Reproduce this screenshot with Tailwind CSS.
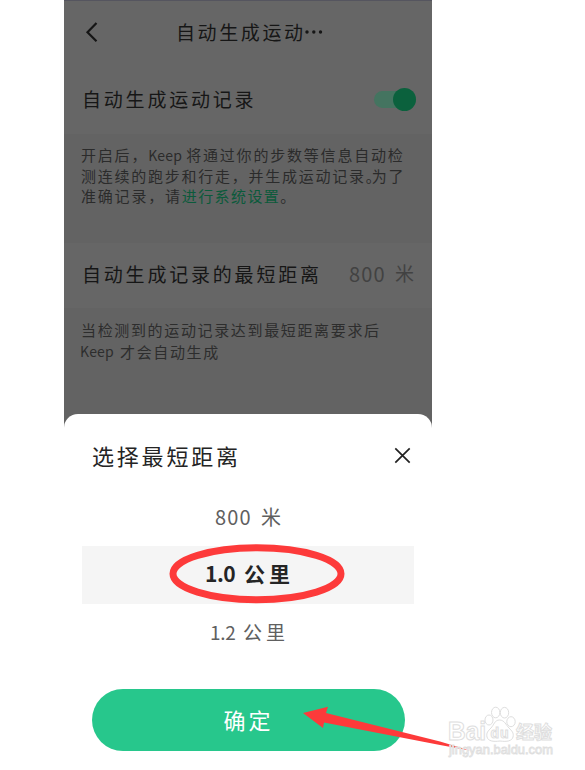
<!DOCTYPE html>
<html lang="zh-CN">
<head>
<meta charset="utf-8">
<title>自动生成运动记录</title>
<script src="https://cdn.jsdelivr.net/npm/@tailwindcss/browser@4"></script>
</head>
<body class="bg-white">
<div class="relative w-[585px] h-[770px] overflow-hidden font-['KaiTi','Noto_Sans_CJK_SC',sans-serif] whitespace-nowrap">
  <main class="ml-16 w-[368px] h-[770px] flex flex-col bg-[#636363] text-[#161616]">
    <section class="h-[134px] bg-[#666] border-t border-[#55555f]">
      <header class="h-[62px] flex items-center pl-[20px]">
        <svg class="w-[16px] h-[22px]" viewBox="0 0 16 22" fill="none" stroke="#151515" stroke-width="2.2"><path d="M12.5 2 3.500 11.200l9 9"/></svg>
        <h1 class="ml-[76px] text-[19px] tracking-[2.6px]">自动生成运动</h1>
        <svg class="w-[20px] h-[4px] -ml-[2px]" viewBox="0 0 20 4" fill="#161616"><circle cx="3" cy="2" r="1.700"/><circle cx="9.800" cy="2" r="1.700"/><circle cx="16.500" cy="2" r="1.700"/></svg>
      </header>
      <div class="h-[72px] flex justify-between items-center pl-[18px] pr-[16px]">
        <span class="text-[19px] tracking-[2.8px]">自动生成运动记录</span>
        <span class="flex items-center justify-end w-[42px] h-[17px] mt-px rounded-full bg-[#447460]"><i class="size-[23px] rounded-full bg-[#0b613d] shrink-0"></i></span>
      </div>
    </section>
    <section class="h-[109px] pt-[11px] pl-[17px] text-[15px] leading-[20.7px] tracking-[1.8px] text-[#2b2b2b]">
      <p class="flex"><span>开启后，</span><span class="w-[38px] text-[14px] tracking-[0.2px]">Keep</span><span>将通过你的步数等信息自动检</span></p>
      <p class="tracking-[1.75px]">测连续的跑步和行走，并生成运动记录<span class="tracking-[-9px]">。</span>为了</p>
      <p class="flex"><span>准确记录，请</span><span class="text-[#0b5a3b] tracking-[1.4px]">进行系统设置</span><span>。</span></p>
    </section>
    <section class="h-[65px] pb-[3px] bg-[#666] flex items-center justify-between pl-[18px] pr-[18px]">
      <span class="text-[19px] tracking-[2.8px]">自动生成记录的最短距离</span>
      <span class="flex text-[#424242] text-[20px]"><span class="w-[46px] tracking-[1.2px]">800</span><span class="text-[19px]">米</span></span>
    </section>
    <section class="h-[106px] pt-[11px] pl-[17px] text-[15px] leading-[21.500px] tracking-[1.65px] text-[#2d2d2d]">
      <p>当检测到的运动记录达到最短距离要求后</p>
      <p class="flex"><span class="w-[40px] text-[14px] tracking-[0.2px] -ml-px">Keep</span><span>才会自动生成</span></p>
    </section>
    <section class="h-[356px] shrink-0 bg-white rounded-t-[14px] flex flex-col">
      <header class="h-[82px] pl-[28px] pr-[21px] flex items-center justify-between text-[#242424]">
        <h2 class="text-[22px] tracking-[2.8px]">选择最短距离</h2>
        <svg class="w-[17px] h-[17px]" viewBox="0 0 17 17" stroke="#222" stroke-width="1.700" fill="none"><path d="M1.300 1.300l14.400 14.400M15.700 1.300 1.300 15.700"/></svg>
      </header>
      <div class="h-[50px] pb-[8px] flex items-center justify-center text-[#606060] text-[20px]"><span class="w-[46px] tracking-[1.2px]">800</span><span>米</span></div>
      <div class="h-[58px] pb-[2px] mx-[18px] bg-[#f5f5f5] flex items-center justify-center text-[#252525] text-[21px] font-bold"><span class="w-[39px] tracking-[-0.500px]">1.0</span><span class="tracking-[4px] -mr-[3px]">公里</span></div>
      <div class="h-[57px] flex items-center justify-center text-[#606060] text-[19px]"><span class="w-[33px] tracking-[-0.3px]">1.2</span><span class="tracking-[4px] -mr-[3px]">公里</span></div>
      <button class="mt-[28px] ml-[28px] w-[313px] h-[62px] pb-[2px] rounded-full bg-[#27c78c] text-white text-[22px] tracking-[3px]">确定</button>
    </section>
  </main>

  <!-- Tap hints -->
  <svg class="absolute inset-0 w-[585px] h-[770px]" viewBox="0 0 585 770">
    <ellipse cx="257" cy="573.800" rx="84" ry="26" fill="none" stroke="#fd3a3a" stroke-width="7"/>
    <path fill="#fd3a3a" d="M303 713 328 706.800 326 713 440 741.500 470 750.500 440 745 324 722.500 323 728Z"/>
  </svg>

  <!-- Watermark -->
  <svg class="absolute left-[440px] top-[700px] w-[125px] h-[65px]" viewBox="0 0 125 65" fill="#fff" stroke="#dedede" stroke-width="1">
    <text x="8" y="40" font-family="Liberation Sans, sans-serif" font-weight="bold" font-size="25" textLength="38" lengthAdjust="spacingAndGlyphs">Bai</text>
    <ellipse cx="49" cy="20" rx="4" ry="5"/><ellipse cx="55.700" cy="12.500" rx="4.200" ry="5.300"/><ellipse cx="64.500" cy="12.700" rx="4.200" ry="5.300"/><ellipse cx="71" cy="21.700" rx="4.200" ry="5"/>
    <path d="M59.500 20c5 0 6.500 5 9.500 8s5 5 4 9-6 5-13 4c-7 1-12 0-13-4s1-6 4-9 3.500-8 8.500-8Z"/>
    <text x="50.500" y="38" font-family="Liberation Sans, sans-serif" font-weight="bold" font-size="14" textLength="18">du</text>
    <text x="76" y="39" font-family="Noto Sans CJK SC, sans-serif" font-weight="bold" font-size="18" textLength="36">经验</text>
    <text x="9" y="53.500" font-family="Liberation Sans, sans-serif" font-weight="normal" font-size="12" textLength="104" lengthAdjust="spacingAndGlyphs" stroke-width=".8">jingyan.baidu.com</text>
  </svg>
</div>
</body>
</html>
